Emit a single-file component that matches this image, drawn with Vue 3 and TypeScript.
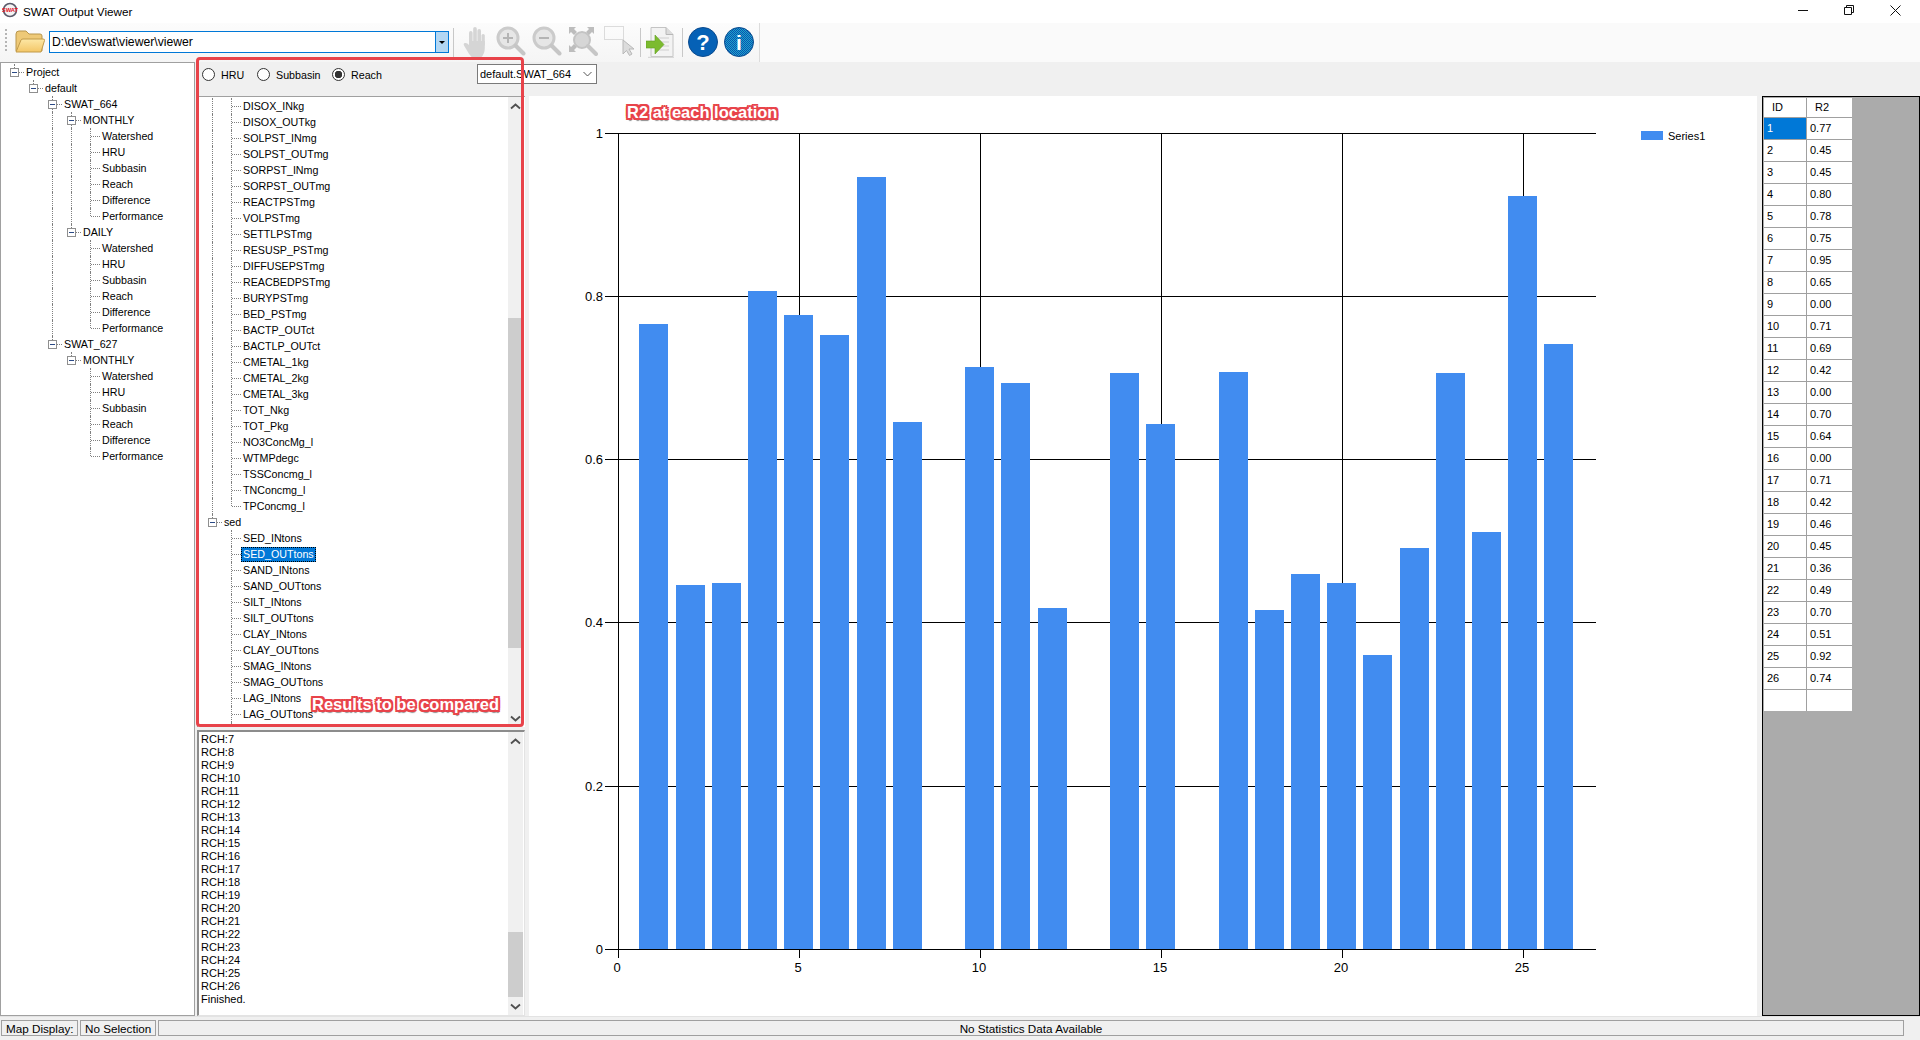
<template>
  <div class="app">
    <!-- Barra de titulo -->
    <div class="titlebar">
      <svg class="app-icon" width="16" height="16" viewBox="0 0 16 16">
        <circle cx="8" cy="8" r="6.5" fill="#f4f4f4" stroke="#5a5a6a" stroke-width="1.6" />
        <text x="8" y="10" text-anchor="middle" class="app-icon-text">SWAT</text>
      </svg>
      <span class="title">SWAT Output Viewer</span>
      <div class="win-btn">
        <svg width="10" height="10" viewBox="0 0 10 10"><path d="M0 5.5h10" stroke="#111" /></svg>
      </div>
      <div class="win-btn">
        <svg width="10" height="10" viewBox="0 0 10 10">
          <path d="M.5 2.5h7v7h-7zM2.5 2.5v-2h7v7h-2" fill="none" stroke="#111" />
        </svg>
      </div>
      <div class="win-btn">
        <svg width="11" height="11" viewBox="0 0 11 11"><path d="M.5.5l10 10M10.5.5l-10 10" stroke="#111" /></svg>
      </div>
    </div>

    <!-- Toolbar -->
    <div class="toolbar">
      <div class="tools">
        <div class="grip"></div>
        <svg class="folder" width="30" height="23" viewBox="0 0 30 23">
          <defs>
            <linearGradient id="folderFront" x1="0" y1="0" x2="0" y2="1">
              <stop offset="0" stop-color="#fde8a6" />
              <stop offset="1" stop-color="#f3c667" />
            </linearGradient>
          </defs>
          <path d="M1 4q0-3 3-3h7l3 3h11q2 0 2 2v15H1z" fill="#eec977" stroke="#b8964c" />
          <path d="M1 22l5-12q.5-1 2-1h20q2 0 1.500 1.500L26 22z" fill="url(#folderFront)" stroke="#c19a4a" />
        </svg>
        <div class="path-box">
          <span class="path-text">D:\dev\swat\viewer\viewer</span>
          <div class="path-arrow"><i></i></div>
        </div>
        <div class="sep sep-a"></div>

        <svg class="ic ic-hand" width="24" height="32" viewBox="0 0 24 32">
          <g fill="#d5d5d5">
            <rect x="6" y="5" width="3.600" height="14" rx="1.800" />
            <rect x="10.200" y="1" width="3.600" height="16" rx="1.800" />
            <rect x="14.400" y="3" width="3.600" height="15" rx="1.800" />
            <rect x="18.500" y="8" width="3.300" height="12" rx="1.600" />
            <path d="M6 15h15.800v7q0 6-3.800 9.500H9q-3-3-5-7l-3-5q-1-2 1-2.500q2-.5 4 2z" />
          </g>
        </svg>
        <svg class="ic ic-zoom-in" width="30" height="30" viewBox="0 0 30 30">
          <circle cx="12" cy="12" r="10" fill="#e6e6e6" stroke="#cbcbcb" stroke-width="3" />
          <path d="M19.500 19.500l8 8" stroke="#c6c6c6" stroke-width="4" stroke-linecap="round" />
          <path d="M7 12h10M12 7v10" stroke="#b4b4b4" stroke-width="2" />
        </svg>
        <svg class="ic ic-zoom-out" width="30" height="30" viewBox="0 0 30 30">
          <circle cx="12" cy="12" r="10" fill="#e6e6e6" stroke="#cbcbcb" stroke-width="3" />
          <path d="M19.500 19.500l8 8" stroke="#c6c6c6" stroke-width="4" stroke-linecap="round" />
          <path d="M7 12h10" stroke="#b4b4b4" stroke-width="2" />
        </svg>
        <svg class="ic ic-extent" width="30" height="30" viewBox="0 0 30 30">
          <circle cx="14" cy="14" r="8" fill="#d6d6d6" stroke="#c4c4c4" stroke-width="2" />
          <path d="M20 20l8 8" stroke="#c6c6c6" stroke-width="4" stroke-linecap="round" />
          <path d="M1 1h7l-2 2 3 3-3 3-3-3-2 2zM26 1h-7l2 2-3 3 3 3 3-3 2 2zM1 26v-7l2 2 3-3 3 3-3 3 2 2z" fill="#bdbdbd" />
        </svg>
        <svg class="ic ic-select" width="31" height="30" viewBox="0 0 31 30">
          <rect x=".5" y=".5" width="19" height="13" fill="none" stroke="#bdbdbd" stroke-dasharray="1 1" />
          <path d="M19 14v14l3.500-3.500 3 5 2.500-1.500-3-5h5z" fill="#dcdcdc" stroke="#b8b8b8" />
        </svg>
        <div class="sep sep-b"></div>
        <svg class="ic ic-doc" width="29" height="31" viewBox="0 0 29 31">
          <path d="M5 .5h15l7 7v22H5z" fill="#f3f3f3" stroke="#c4c4c4" />
          <path d="M20 .5v7h7" fill="#dcdcdc" stroke="#b8b8b8" />
          <path d="M12 11h11M14 15h9M14 19h9M12 23h11" stroke="#cfcfcf" />
          <path d="M0 14h9V8l9 9.500-9 9.500v-6H0z" fill="#7cbb2f" stroke="#5f9d1f" stroke-width=".6" />
          <path d="M2 30.500h26" stroke="#d8d8d8" stroke-width="1.500" />
        </svg>
        <div class="sep sep-c"></div>
        <svg class="ic ic-help" width="30" height="30" viewBox="0 0 30 30">
          <circle cx="15" cy="15" r="14.500" fill="#0561b6" stroke="#0b4b8e" />
          <text x="15" y="23" text-anchor="middle" class="help-mark">?</text>
        </svg>
        <svg class="ic ic-info" width="30" height="30" viewBox="0 0 30 30">
          <defs>
            <pattern id="dither" width="2" height="2" patternUnits="userSpaceOnUse">
              <rect width="2" height="2" fill="#0850b4" />
              <rect width="1" height="1" fill="#1fa6c6" />
              <rect x="1" y="1" width="1" height="1" fill="#1fa6c6" />
            </pattern>
          </defs>
          <circle cx="15" cy="15" r="14.500" fill="url(#dither)" stroke="#0b4b8e" />
          <text x="15" y="23" text-anchor="middle" class="info-mark">i</text>
        </svg>
      </div>
    </div>

    <div class="main">
      <!-- Arbol de proyecto -->
      <div class="tree">
        <div class="row" v-for="(row, i) in projectRows" :key="i">
          <span v-for="(cell, c) in row.cells" :key="c" class="cell" :class="cell">
            <i v-if="cell.startsWith('box')" class="box"></i>
          </span>
          <span class="label">{{ row.label }}</span>
        </div>
      </div>

      <div class="right">
        <div class="strip">
          <label class="radio radio-hru"><input type="radio" name="kind" /><span>HRU</span></label>
          <label class="radio radio-sub"><input type="radio" name="kind" /><span>Subbasin</span></label>
          <label class="radio radio-reach"><input type="radio" name="kind" checked /><span>Reach</span></label>
          <div class="scenario">
            <span>default.SWAT_664</span>
            <svg width="9" height="6" viewBox="0 0 9 6"><path d="M.5 1l4 4 4-4" fill="none" stroke="#555" /></svg>
          </div>
        </div>

        <div class="body">
          <div class="side">
            <!-- Lista de resultados -->
            <div class="list">
              <div class="list-rows">
                <div class="row" v-for="(row, i) in resultRows" :key="i">
                  <span v-for="(cell, c) in row.cells" :key="c" class="cell" :class="cell">
                    <i v-if="cell.startsWith('box')" class="box"></i>
                  </span>
                  <span class="label" :class="{ selected: row.label === 'SED_OUTtons' }">{{ row.label }}</span>
                </div>
              </div>
              <div class="scrollbar">
                <svg class="arrow" width="17" height="17" viewBox="0 0 17 17"><path d="M4 10.500l4.500-4 4.500 4" /></svg>
                <div class="track"><div class="thumb thumb-list"></div></div>
                <svg class="arrow" width="17" height="17" viewBox="0 0 17 17"><path d="M4 6.500l4.500 4 4.500-4" /></svg>
              </div>
            </div>

            <!-- Log -->
            <div class="log">
              <div class="log-lines">
                <div v-for="line in logLines" :key="line">{{ line }}</div>
              </div>
              <div class="scrollbar">
                <svg class="arrow" width="17" height="17" viewBox="0 0 17 17"><path d="M4 10.500l4.500-4 4.500 4" /></svg>
                <div class="track"><div class="thumb thumb-log"></div></div>
                <svg class="arrow" width="17" height="17" viewBox="0 0 17 17"><path d="M4 6.500l4.500 4 4.500-4" /></svg>
              </div>
            </div>
          </div>

          <!-- Grafico -->
          <div class="chart">
            <svg width="1228" height="920" viewBox="529 96 1228 920">
              <g class="grid-lines">
                <line v-for="t in yTicks" :key="t.label" x1="605" x2="1596" :y1="t.y + 0.5" :y2="t.y + 0.5" />
                <line v-for="t in xTicks" :key="t.label" :x1="t.x + 0.5" :x2="t.x + 0.5" y1="133" y2="958" />
              </g>
              <rect
                v-for="b in bars"
                :key="b.x"
                :x="b.x"
                :y="b.y"
                width="29"
                :height="b.h"
                fill="#418cf0"
              />
              <line class="base" x1="605" x2="1596" y1="949.5" y2="949.5" />
              <text v-for="t in yTicks" :key="t.label" x="603" :y="t.y + 5" text-anchor="end" class="axis">{{ t.label }}</text>
              <text v-for="t in xTicks" :key="t.label" :x="t.x - 1" y="972" text-anchor="middle" class="axis">{{ t.label }}</text>
              <rect x="1641" y="131" width="22" height="9" fill="#418cf0" />
              <text x="1668" y="140" class="legend">Series1</text>
            </svg>
            <div class="note note-chart">R2 at each location</div>
          </div>

          <!-- Tabla -->
          <div class="table-panel">
            <div class="table">
              <div class="th">ID</div>
              <div class="th">R2</div>
              <template v-for="(r, i) in tableRows" :key="r.id">
                <div class="td" :class="{ current: i === 0 }">{{ r.id }}</div>
                <div class="td">{{ r.r2 }}</div>
              </template>
              <div class="td"></div>
              <div class="td"></div>
            </div>
          </div>
        </div>

        <!-- Recuadro rojo de la anotacion -->
        <div class="red-box">
          <div class="note note-list">Results to be compared</div>
        </div>
      </div>
    </div>

    <div class="status">
      <div class="panel panel-map">Map Display:</div>
      <div class="panel panel-sel">No Selection</div>
      <div class="panel panel-msg">No Statistics Data Available</div>
    </div>
  </div>
</template>

<script setup lang="ts">
interface TreeNode {
  label: string;
  children?: TreeNode[];
}

interface Row {
  cells: string[];
  label: string;
}

const leaves = ["Watershed", "HRU", "Subbasin", "Reach", "Difference", "Performance"];
const leafNodes = (): TreeNode[] => leaves.map((label) => ({ label }));

const project: TreeNode[] = [
  {
    label: "Project",
    children: [
      {
        label: "default",
        children: [
          {
            label: "SWAT_664",
            children: [
              { label: "MONTHLY", children: leafNodes() },
              { label: "DAILY", children: leafNodes() },
            ],
          },
          {
            label: "SWAT_627",
            children: [{ label: "MONTHLY", children: leafNodes() }],
          },
        ],
      },
    ],
  },
];

const flatten = (nodes: TreeNode[], prefix: string[]): Row[] => {
  const out: Row[] = [];
  nodes.forEach((node, i) => {
    const last = i === nodes.length - 1;
    const own = node.children ? (last ? "box-last" : "box-tee") : last ? "elbow" : "tee";
    out.push({ cells: [...prefix, own], label: node.label });
    if (node.children) out.push(...flatten(node.children, [...prefix, last ? "blank" : "pipe"]));
  });
  return out;
};

const projectRows = flatten(project, []);

const pstNames = [
  "DISOX_INkg", "DISOX_OUTkg", "SOLPST_INmg", "SOLPST_OUTmg", "SORPST_INmg", "SORPST_OUTmg",
  "REACTPSTmg", "VOLPSTmg", "SETTLPSTmg", "RESUSP_PSTmg", "DIFFUSEPSTmg", "REACBEDPSTmg",
  "BURYPSTmg", "BED_PSTmg", "BACTP_OUTct", "BACTLP_OUTct", "CMETAL_1kg", "CMETAL_2kg",
  "CMETAL_3kg", "TOT_Nkg", "TOT_Pkg", "NO3ConcMg_l", "WTMPdegc", "TSSConcmg_l", "TNConcmg_l",
  "TPConcmg_l",
];

const sedNames = [
  "SED_INtons", "SED_OUTtons", "SAND_INtons", "SAND_OUTtons", "SILT_INtons", "SILT_OUTtons",
  "CLAY_INtons", "CLAY_OUTtons", "SMAG_INtons", "SMAG_OUTtons", "LAG_INtons", "LAG_OUTtons", "",
];

const resultRows: Row[] = [
  ...pstNames.map((label, i) => ({
    cells: ["pipe", i === pstNames.length - 1 ? "elbow" : "tee"],
    label,
  })),
  { cells: ["box-last"], label: "sed" },
  ...sedNames.map((label) => ({ cells: ["blank", "tee"], label })),
];

const logLines: string[] = [];
for (let n = 7; n <= 26; n++) logLines.push(`RCH:${n}`);
logLines.push("Finished.");

const r2 = [
  "0.77", "0.45", "0.45", "0.80", "0.78", "0.75", "0.95", "0.65", "0.00", "0.71", "0.69", "0.42", "0.00",
  "0.70", "0.64", "0.00", "0.71", "0.42", "0.46", "0.45", "0.36", "0.49", "0.70", "0.51", "0.92", "0.74",
];
const tableRows = r2.map((v, i) => ({ id: i + 1, r2: v }));

// valores sin redondear, leidos del grafico
const exact = [
  0.766, 0.446, 0.448, 0.806, 0.777, 0.753, 0.9465, 0.646, 0, 0.7137, 0.694, 0.4177, 0,
  0.706, 0.643, 0, 0.7077, 0.416, 0.4598, 0.448, 0.3606, 0.491, 0.706, 0.511, 0.9225, 0.742,
];

const ZERO_Y = 949;
const PX_PER_UNIT = 816;
const xOf = (v: number) => 618.7 + v * 36.2;

const bars = exact
  .map((v, i) => {
    const h = Math.round(v * PX_PER_UNIT);
    return { x: Math.round(xOf(i + 1) - 15.5), y: ZERO_Y - h, h };
  })
  .filter((b) => b.h > 0);

const yTicks = [
  { label: "0", y: 949 },
  { label: "0.2", y: 786 },
  { label: "0.4", y: 622 },
  { label: "0.6", y: 459 },
  { label: "0.8", y: 296 },
  { label: "1", y: 133 },
];

const xTicks = [0, 5, 10, 15, 20, 25].map((v) => ({ label: String(v), x: Math.floor(xOf(v)) }));
</script>

<style>
body {
  margin: 0;
  overflow: hidden;
}
</style>

<style scoped>
.app {
  width: 1920px;
  height: 1040px;
  display: flex;
  flex-direction: column;
  background: #f0f0f0;
  color: #000;
  font: 11px "Liberation Sans", Arial, sans-serif;
  overflow: hidden;
}

/* Titulo */
.titlebar {
  height: 23px;
  flex: none;
  display: flex;
  align-items: flex-start;
  background: #fff;
}
.app-icon {
  margin: 2px 0 0 2px;
}
.app-icon-text {
  font: bold 5.800px "Liberation Sans", sans-serif;
  fill: #e2101f;
}
.title {
  flex: 1;
  margin: 5px 0 0 5px;
  font-size: 11.700px;
  line-height: 14px;
}
.win-btn {
  width: 46px;
  height: 20px;
  display: flex;
  align-items: center;
  justify-content: center;
}
.win-btn:last-child {
  margin-right: 2px;
}

/* Toolbar */
.toolbar {
  height: 39px;
  flex: none;
  background: #fafafa;
}
.tools {
  width: 760px;
  height: 100%;
  display: flex;
  align-items: flex-start;
  background: linear-gradient(#fcfcfc, #f5f5f5);
  border-right: 1px solid #dcdcdc;
  box-sizing: border-box;
}
.grip {
  width: 2px;
  height: 24px;
  margin: 6px 0 0 5px;
  background: repeating-linear-gradient(#b5b5b5 0 2px, transparent 2px 4px);
}
.folder {
  margin: 7px 0 0 8px;
}
.path-box {
  width: 400px;
  height: 22px;
  margin: 8px 0 0 4px;
  box-sizing: border-box;
  border: 1px solid #0078d7;
  background: #fff;
  display: flex;
  align-items: center;
}
.path-text {
  flex: 1;
  padding-left: 2px;
  font-size: 12.200px;
}
.path-arrow {
  width: 12px;
  height: 100%;
  background: #b3d7f3;
  border-left: 1px solid #0078d7;
  display: flex;
  align-items: center;
  justify-content: center;
}
.path-arrow i {
  border: 3px solid transparent;
  border-top: 3px solid #000;
  margin-top: 3px;
}
.sep {
  width: 1px;
  height: 29px;
  margin-top: 5px;
  background: #c8c8c8;
}
.sep-a {
  margin-left: 4px;
}
.sep-b {
  margin-left: 5px;
}
.sep-c {
  margin-left: 7px;
}
.ic {
  flex: none;
}
.ic-hand {
  margin: 3px 0 0 9px;
}
.ic-zoom-in {
  margin: 3px 0 0 9px;
}
.ic-zoom-out {
  margin: 3px 0 0 6px;
}
.ic-extent {
  margin: 3px 0 0 6px;
}
.ic-select {
  margin: 3px 0 0 6px;
}
.ic-doc {
  margin: 4px 0 0 5px;
}
.ic-help {
  margin: 4px 0 0 5px;
}
.ic-info {
  margin: 4px 0 0 6px;
}
.help-mark {
  font: bold 22px "Liberation Sans", sans-serif;
  fill: #fff;
}
.info-mark {
  font: bold 21px "Liberation Sans", sans-serif;
  fill: #fff;
}

.main {
  flex: 1;
  min-height: 0;
  display: flex;
}

/* Arbol */
.tree {
  width: 195px;
  flex: none;
  box-sizing: border-box;
  border: 1px solid #a0a0a0;
  padding: 1px 0 0 4px;
  background: #fff;
}
.row {
  height: 16px;
  display: flex;
  align-items: center;
  white-space: nowrap;
}
.cell {
  position: relative;
  width: 19px;
  height: 16px;
  flex: none;
}
.pipe::before,
.tee::before,
.box-tee::before {
  content: "";
  position: absolute;
  left: 9px;
  top: 0;
  bottom: 0;
  border-left: 1px dotted #808080;
}
.elbow::before,
.box-last::before {
  content: "";
  position: absolute;
  left: 9px;
  top: 0;
  height: 8px;
  border-left: 1px dotted #808080;
}
.tee::after,
.elbow::after,
.box-tee::after,
.box-last::after {
  content: "";
  position: absolute;
  left: 10px;
  right: 0;
  top: 8px;
  border-top: 1px dotted #808080;
}
.box {
  position: absolute;
  left: 5px;
  top: 4px;
  width: 7px;
  height: 7px;
  border: 1px solid #8f8f8f;
  background: #fff;
  z-index: 1;
}
.box::after {
  content: "";
  position: absolute;
  left: 1px;
  right: 1px;
  top: 3px;
  height: 1px;
  background: #2b4a86;
}
.label {
  padding: 0 2px;
  font-size: 10.700px;
  line-height: 15px;
}
.label.selected {
  background: #0078d7;
  color: #fff;
  outline: 1px dotted #000;
  outline-offset: -1px;
}

/* Columna derecha */
.right {
  flex: 1;
  min-width: 0;
  display: flex;
  flex-direction: column;
  position: relative;
}
.strip {
  height: 34px;
  flex: none;
  display: flex;
  align-items: flex-start;
  padding-left: 7px;
}
.radio {
  display: flex;
  align-items: center;
  gap: 6px;
  height: 13px;
  margin-top: 6px;
  font-size: 10.700px;
}
.radio-hru {
  width: 55px;
}
.radio-sub {
  width: 75px;
}
.radio-reach {
  width: 145px;
}
.radio input {
  appearance: none;
  width: 13px;
  height: 13px;
  margin: 0;
  border: 1px solid #333;
  border-radius: 50%;
  background: #fff;
  box-sizing: border-box;
  flex: none;
}
.radio input:checked {
  background: radial-gradient(circle, #333 0 3.500px, #fff 4px);
}
.scenario {
  width: 120px;
  height: 20px;
  margin-top: 2px;
  box-sizing: border-box;
  border: 1px solid #7a7a7a;
  background: #fff;
  padding: 0 4px 0 2px;
  display: flex;
  align-items: center;
  justify-content: space-between;
}

.body {
  flex: 1;
  min-height: 0;
  display: flex;
}
.side {
  width: 328px;
  flex: none;
  margin-left: 2px;
  display: flex;
  flex-direction: column;
  gap: 3px;
}
.list {
  height: 631px;
  flex: none;
  box-sizing: border-box;
  border-top: 1px solid #a0a0a0;
  border-left: 1px solid #a0a0a0;
  background: #fff;
  display: flex;
}
.list-rows {
  flex: 1;
  min-width: 0;
  overflow: hidden;
  padding: 1px 0 0 5px;
}
.log {
  flex: 1;
  min-height: 0;
  box-sizing: border-box;
  border-top: 2px solid #8c8c8c;
  border-left: 2px solid #8c8c8c;
  border-right: 1px solid #e3e3e3;
  border-bottom: 1px solid #e3e3e3;
  background: #fff;
  display: flex;
}
.log-lines {
  flex: 1;
  min-width: 0;
  padding: 1px 0 0 2px;
  line-height: 13px;
}
.scrollbar {
  width: 15px;
  flex: none;
  margin-right: 2px;
  padding-top: 1px;
  box-sizing: border-box;
  display: flex;
  flex-direction: column;
  background: #f0f0f0;
}
.log .scrollbar {
  margin-right: 1px;
}
.arrow {
  flex: none;
  margin-left: -1px;
}
.arrow path {
  fill: none;
  stroke: #505050;
  stroke-width: 1.800;
}
.track {
  flex: 1;
  min-height: 0;
}
.thumb {
  background: #cdcdcd;
}
.thumb-list {
  margin-top: 203px;
  height: 330px;
}
.thumb-log {
  margin-top: 182px;
  height: 65px;
}

/* Grafico */
.chart {
  width: 1228px;
  flex: none;
  margin: 0 5px 0 4px;
  background: #fff;
  position: relative;
}
.chart svg {
  display: block;
}
.grid-lines line,
.base {
  stroke: #000;
  stroke-width: 1;
  shape-rendering: crispEdges;
}
.axis {
  font: 13px "Liberation Sans", sans-serif;
}
.legend {
  font: 11px "Liberation Sans", sans-serif;
}

/* Anotaciones */
.red-box {
  position: absolute;
  left: 1px;
  top: -5px;
  width: 328px;
  height: 670px;
  box-sizing: border-box;
  border: 3px solid #e8434a;
  border-radius: 4px;
  pointer-events: none;
}
.note {
  position: absolute;
  color: #fff;
  font-weight: bold;
  font-size: 16.500px;
  line-height: 18px;
  white-space: nowrap;
  text-shadow:
    -2px 0 #e8434a, 2px 0 #e8434a, 0 -2px #e8434a, 0 2px #e8434a,
    -2px -2px #e8434a, 2px -2px #e8434a, -2px 2px #e8434a, 2px 2px #e8434a,
    1px 3px 1px #8d8d8d;
}
.note-chart {
  left: 98px;
  top: 7px;
}
.note-list {
  left: 113px;
  top: 635px;
}

/* Tabla */
.table-panel {
  flex: 1;
  min-width: 0;
  box-sizing: border-box;
  border: 1px solid #000;
  padding: 1px;
  background: #ababab;
}
.table {
  width: 88px;
  display: grid;
  grid-template-columns: 42px 45px;
  grid-template-rows: 19px;
  grid-auto-rows: 21px;
  gap: 1px;
  background: #a0a0a0;
}
.th {
  background: #fff;
  padding-left: 8px;
  line-height: 19px;
}
.td {
  background: #fff;
  padding-left: 3px;
  line-height: 21px;
}
.td.current {
  background: #0078d7;
  color: #fff;
}

/* Barra de estado */
.status {
  height: 24px;
  flex: none;
  box-sizing: border-box;
  padding: 3px 0 4px 1px;
  display: flex;
  gap: 2px;
  background: #f0f0f0;
  border-top: 1px solid #e3e3e3;
  font-size: 11.700px;
}
.panel {
  box-sizing: border-box;
  border: 1px solid #a0a0a0;
  line-height: 15px;
  padding-left: 4px;
  white-space: nowrap;
}
.panel-map {
  width: 77px;
}
.panel-sel {
  width: 76px;
}
.panel-msg {
  width: 1746px;
  padding-left: 0;
  text-align: center;
}
</style>
